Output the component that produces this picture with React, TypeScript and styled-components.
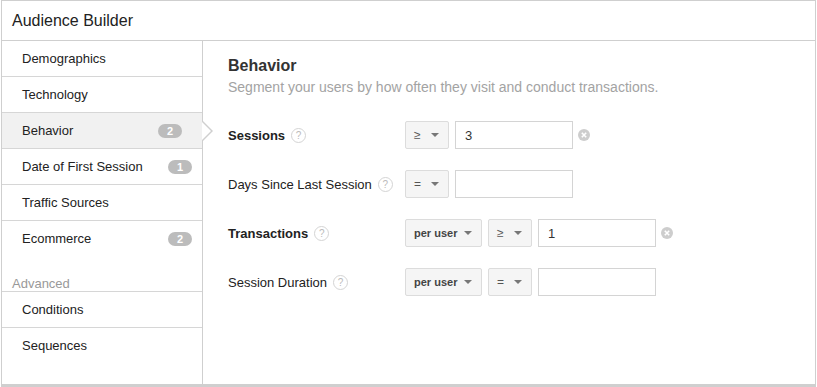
import React from 'react';
import styled, { createGlobalStyle } from 'styled-components';

const GlobalStyle = createGlobalStyle`
  html, body {
    margin: 0;
    padding: 0;
    background: #fff;
    font-family: "Liberation Sans", Arial, sans-serif;
  }
`;

const Frame = styled.div`
  margin-left: 1px;
  width: 815px;
  height: 387px;
  box-sizing: border-box;
  border: 1px solid #cfcfcf;
  border-bottom: 3px solid #cfcfcf;
  display: flex;
  flex-direction: column;
  background: #fff;
`;

const Header = styled.div`
  height: 39px;
  border-bottom: 1px solid #cfcfcf;
  display: flex;
  align-items: center;
  padding-left: 10px;
  font-size: 16px;
  color: #222;
`;

const Body = styled.div`
  flex: 1;
  display: flex;
  min-height: 0;
`;

const Sidebar = styled.div`
  width: 200px;
  border-right: 1px solid #cfcfcf;
  display: flex;
  flex-direction: column;
`;

const NavItem = styled.div<{ $active?: boolean; $last?: boolean }>`
  position: relative;
  height: 35px;
  display: flex;
  align-items: center;
  justify-content: space-between;
  padding: 0 10px 0 20px;
  font-size: 13px;
  color: #222;
  background: ${p => (p.$active ? '#f1f1f1' : '#fff')};
  border-bottom: 1px solid ${p => (p.$last ? 'transparent' : '#d6d6d6')};
`;

const Badge = styled.span<{ $shift?: number }>`
  min-width: 24px;
  height: 14px;
  border-radius: 7px;
  background: #bcbcbc;
  color: #fff;
  font-size: 11px;
  font-weight: bold;
  line-height: 14px;
  text-align: center;
  margin-right: ${p => p.$shift ?? 0}px;
`;

const Pointer = styled.span`
  position: absolute;
  right: -11px;
  top: 8px;
  width: 0;
  height: 0;
  border-top: 10px solid transparent;
  border-bottom: 10px solid transparent;
  border-left: 10px solid #cfcfcf;
  z-index: 2;
  &::after {
    content: '';
    position: absolute;
    left: -11px;
    top: -9px;
    border-top: 9px solid transparent;
    border-bottom: 9px solid transparent;
    border-left: 9px solid #fff;
  }
`;

const SectionLabel = styled.div`
  height: 35px;
  display: flex;
  align-items: flex-end;
  padding: 0 0 0 10px;
  box-sizing: border-box;
  font-size: 13px;
  color: #999;
  border-bottom: 1px solid #d6d6d6;
`;

const Content = styled.div`
  flex: 1;
  padding: 15px 0 0 25px;
`;

const Title = styled.div`
  font-size: 16px;
  font-weight: bold;
  color: #333;
  line-height: 20px;
`;

const Subtitle = styled.div`
  font-size: 14px;
  color: #a3a3a3;
  line-height: 20px;
  margin-top: 1px;
`;

const Rows = styled.div`
  margin-top: 24px;
  display: flex;
  flex-direction: column;
  gap: 21px;
`;

const Row = styled.div`
  display: flex;
  align-items: center;
  height: 28px;
`;

const Label = styled.div<{ $bold?: boolean }>`
  width: 177px;
  display: flex;
  align-items: center;
  gap: 6px;
  font-size: 13px;
  color: #222;
  font-weight: ${p => (p.$bold ? 'bold' : 'normal')};
`;

const Help = styled.span`
  width: 13px;
  height: 13px;
  border-radius: 50%;
  border: 1px solid #d4d4d4;
  color: #bbb;
  font-size: 10px;
  font-weight: normal;
  line-height: 13px;
  text-align: center;
`;

const Controls = styled.div`
  display: flex;
  align-items: center;
  gap: 6px;
`;

const Select = styled.div<{ $w: number }>`
  width: ${p => p.$w}px;
  height: 28px;
  box-sizing: border-box;
  border: 1px solid #dcdcdc;
  border-radius: 2px;
  background: #f5f5f5;
  display: flex;
  align-items: center;
  justify-content: space-between;
  padding: 0 9px 0 8px;
  font-size: 11px;
  font-weight: bold;
  color: #444;
`;

const Op = styled.span`
  font-weight: normal;
  font-size: 12px;
  color: #555;
`;

const Caret = styled.span`
  width: 0;
  height: 0;
  border-left: 4px solid transparent;
  border-right: 4px solid transparent;
  border-top: 4px solid #777;
`;

const Input = styled.div`
  width: 118px;
  height: 28px;
  box-sizing: border-box;
  border: 1px solid #d4d4d4;
  display: flex;
  align-items: center;
  padding-left: 9px;
  font-size: 13px;
  color: #333;
`;

const Clear = styled.span`
  width: 12px;
  height: 12px;
  display: flex;
  margin-left: -1px;
`;

const ClearIcon = () => (
  <Clear>
    <svg width="12" height="12" viewBox="0 0 12 12">
      <circle cx="6" cy="6" r="6" fill="#cdcdcd" />
      <path d="M3.8 3.8 L8.2 8.2 M8.2 3.8 L3.8 8.2" stroke="#fff" strokeWidth="1.6" />
    </svg>
  </Clear>
);

const nav = [
  { label: 'Demographics' },
  { label: 'Technology' },
  { label: 'Behavior', badge: '2', active: true },
  { label: 'Date of First Session', badge: '1' },
  { label: 'Traffic Sources' },
  { label: 'Ecommerce', badge: '2', last: true },
];

export default function App() {
  return (
    <>
      <GlobalStyle />
      <Frame>
        <Header>Audience Builder</Header>
        <Body>
          <Sidebar>
            {nav.map(item => (
              <NavItem key={item.label} $active={item.active} $last={item.last}>
                {item.label}
                {item.badge && <Badge $shift={item.active ? 10 : 0}>{item.badge}</Badge>}
                {item.active && <Pointer />}
              </NavItem>
            ))}
            <SectionLabel>Advanced</SectionLabel>
            <NavItem>Conditions</NavItem>
            <NavItem $last>Sequences</NavItem>
          </Sidebar>
          <Content>
            <Title>Behavior</Title>
            <Subtitle>Segment your users by how often they visit and conduct transactions.</Subtitle>
            <Rows>
              <Row>
                <Label $bold>Sessions <Help>?</Help></Label>
                <Controls>
                  <Select $w={44}><Op>≥</Op><Caret /></Select>
                  <Input>3</Input>
                  <ClearIcon />
                </Controls>
              </Row>
              <Row>
                <Label>Days Since Last Session <Help>?</Help></Label>
                <Controls>
                  <Select $w={44}><Op>=</Op><Caret /></Select>
                  <Input />
                </Controls>
              </Row>
              <Row>
                <Label $bold>Transactions <Help>?</Help></Label>
                <Controls>
                  <Select $w={77}>per user<Caret /></Select>
                  <Select $w={44}><Op>≥</Op><Caret /></Select>
                  <Input>1</Input>
                  <ClearIcon />
                </Controls>
              </Row>
              <Row>
                <Label>Session Duration <Help>?</Help></Label>
                <Controls>
                  <Select $w={77}>per user<Caret /></Select>
                  <Select $w={44}><Op>=</Op><Caret /></Select>
                  <Input />
                </Controls>
              </Row>
            </Rows>
          </Content>
        </Body>
      </Frame>
    </>
  );
}
